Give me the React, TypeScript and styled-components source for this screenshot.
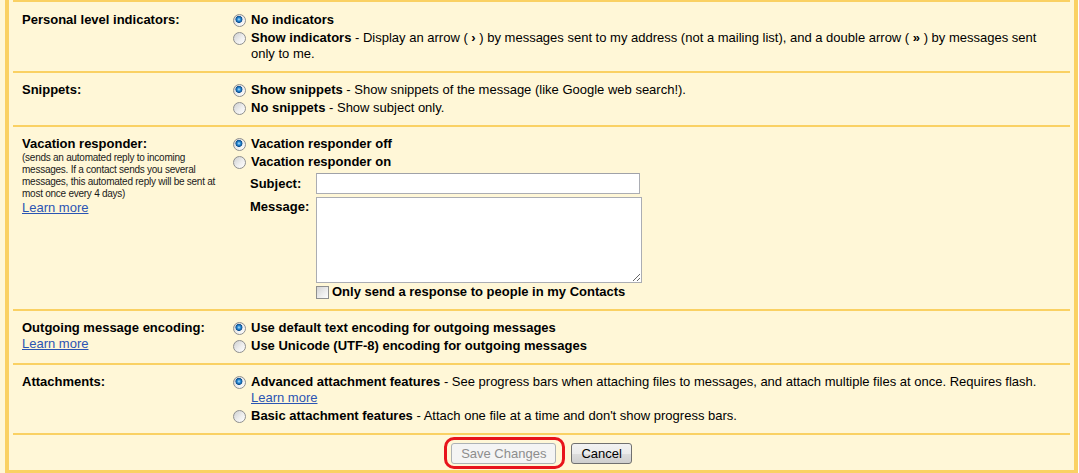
import React from "react";
import styled, { createGlobalStyle } from "styled-components";

const GlobalStyle = createGlobalStyle`
    html, body {
        margin: 0;
        padding: 0;
        background: #ffffff;
    }
    body {
        font-family: "Liberation Sans", Arial, sans-serif;
        font-size: 13px;
        color: #000;
    }
`;

const Page = styled.div`
    width: 1078px;
    padding-left: 5px;
    box-sizing: border-box;
    background: #fff7d7;
`;

const Frame = styled.div`
    background: #fff7d7;
    border: 4px solid #fad163;
    border-top: none;
    padding: 0 4px;
`;

const Section = styled.div<{ $first?: boolean }>`
    display: flex;
    border-top: 2px solid #fad163;
    padding-top: ${({ $first }) => ($first ? "10px" : "9px")};
    padding-bottom: 9px;
`;

const LabelCell = styled.div`
    width: 220px;
    flex: none;
    box-sizing: border-box;
    padding: 0 12px 0 9px;
    line-height: 16px;
`;

const Title = styled.div`
    font-weight: bold;
`;

const Hint = styled.div`
    font-size: 10px;
    line-height: 12px;
    letter-spacing: -0.25px;
    color: #1a1a1a;
`;

const Link = styled.a`
    color: #2b55b3;
    text-decoration: underline;
    cursor: pointer;
`;

const OptionCell = styled.div`
    flex: 1;
    padding-right: 8px;
    display: flex;
    flex-direction: column;
    gap: 2px;
`;

const Option = styled.label`
    display: flex;
    align-items: flex-start;
    line-height: 16px;
`;

const Radio = styled.input.attrs({ type: "radio" })`
    appearance: none;
    -webkit-appearance: none;
    flex: none;
    width: 13px;
    height: 13px;
    margin: 2px 5px 0 0;
    border-radius: 50%;
    border: 1px solid #8e8f8f;
    box-sizing: border-box;
    background: linear-gradient(135deg, #cfd0d1 0%, #eeeeee 55%, #ffffff 100%);
    &:checked {
        background:
            radial-gradient(circle at 45% 40%, #b8e2fb 0, #2c8fd8 1.6px, #0d4f8f 3.2px, rgba(13, 79, 143, 0) 3.8px),
            linear-gradient(135deg, #cfd0d1 0%, #eeeeee 55%, #ffffff 100%);
    }
`;

const OptionText = styled.span`
    flex: 1;
`;

const Strong = styled.b`
    font-weight: bold;
`;

const Form = styled.div`
    display: grid;
    grid-template-columns: 66px auto;
    justify-content: start;
    row-gap: 3px;
    margin: 1px 0 0 17px;
`;

const FieldLabel = styled.div<{ $top?: boolean }>`
    font-weight: bold;
    line-height: 16px;
    align-self: ${({ $top }) => ($top ? "start" : "center")};
    padding-top: ${({ $top }) => ($top ? "2px" : "0")};
`;

const TextInput = styled.input`
    width: 324px;
    height: 21px;
    box-sizing: border-box;
    border: 1px solid #abadb3;
    border-top-color: #a0a2a8;
    background: #fff;
    font: 13px "Liberation Sans", Arial, sans-serif;
    padding: 1px 3px;
    margin: 0;
`;

const TextArea = styled.textarea`
    width: 326px;
    height: 86px;
    box-sizing: border-box;
    border: 1px solid #abadb3;
    background: #fff;
    font: 13px "Liberation Sans", Arial, sans-serif;
    padding: 2px;
    margin: 0;
    display: block;
`;

const CheckRow = styled.label`
    grid-column: 2;
    display: flex;
    align-items: flex-start;
    font-weight: bold;
    line-height: 16px;
    margin-top: -2px;
`;

const Check = styled.input.attrs({ type: "checkbox" })`
    appearance: none;
    -webkit-appearance: none;
    flex: none;
    width: 13px;
    height: 13px;
    margin: 2px 3px 0 0;
    box-sizing: border-box;
    border: 1px solid #8e8f8f;
    background: linear-gradient(135deg, #d4d4d4 0%, #eeeeee 60%, #fdfdfd 100%);
`;

const ButtonRow = styled.div`
    display: flex;
    justify-content: center;
    gap: 15px;
    border-top: 2px solid #fad163;
    padding: 8px 0 6px;
`;

const Button = styled.button`
    height: 21px;
    padding: 0 9px;
    font: 13px "Liberation Sans", Arial, sans-serif;
    color: #000;
    border: 1px solid #707070;
    border-radius: 3px;
    background: linear-gradient(#f2f2f2 0%, #ebebeb 50%, #dddddd 51%, #cfcfcf 100%);
    &:disabled {
        color: #8d8d8d;
        border-color: #adb2b5;
        background: #f4f4f4;
    }
`;

const Highlight = styled.span`
    position: relative;
    display: inline-flex;
    &::after {
        content: "";
        position: absolute;
        top: -6px;
        bottom: -5px;
        left: -7px;
        right: -9px;
        border: 3px solid #e8141c;
        border-radius: 10px;
        pointer-events: none;
    }
`;

export default function App() {
    return (
        <>
            <GlobalStyle />
            <Page>
                <Frame>
                    <Section $first>
                        <LabelCell>
                            <Title>Personal level indicators:</Title>
                        </LabelCell>
                        <OptionCell>
                            <Option>
                                <Radio name="ind" defaultChecked />
                                <OptionText><Strong>No indicators</Strong></OptionText>
                            </Option>
                            <Option>
                                <Radio name="ind" />
                                <OptionText>
                                    <Strong>Show indicators</Strong> - Display an arrow ( <Strong>›</Strong> ) by messages sent to my address (not a mailing list), and a double arrow ( <Strong>»</Strong> ) by messages sent only to me.
                                </OptionText>
                            </Option>
                        </OptionCell>
                    </Section>

                    <Section>
                        <LabelCell>
                            <Title>Snippets:</Title>
                        </LabelCell>
                        <OptionCell>
                            <Option>
                                <Radio name="snip" defaultChecked />
                                <OptionText>
                                    <Strong>Show snippets</Strong> - Show snippets of the message (like Google web search!).
                                </OptionText>
                            </Option>
                            <Option>
                                <Radio name="snip" />
                                <OptionText>
                                    <Strong>No snippets</Strong> - Show subject only.
                                </OptionText>
                            </Option>
                        </OptionCell>
                    </Section>

                    <Section>
                        <LabelCell>
                            <Title>Vacation responder:</Title>
                            <Hint>
                                (sends an automated reply to incoming messages. If a contact sends you several messages, this automated reply will be sent at most once every 4 days)
                            </Hint>
                            <Link>Learn more</Link>
                        </LabelCell>
                        <OptionCell>
                            <Option>
                                <Radio name="vac" defaultChecked />
                                <OptionText><Strong>Vacation responder off</Strong></OptionText>
                            </Option>
                            <Option>
                                <Radio name="vac" />
                                <OptionText><Strong>Vacation responder on</Strong></OptionText>
                            </Option>
                            <Form>
                                <FieldLabel>Subject:</FieldLabel>
                                <TextInput />
                                <FieldLabel $top>Message:</FieldLabel>
                                <TextArea />
                                <CheckRow>
                                    <Check />
                                    Only send a response to people in my Contacts
                                </CheckRow>
                            </Form>
                        </OptionCell>
                    </Section>

                    <Section>
                        <LabelCell>
                            <Title>Outgoing message encoding:</Title>
                            <Link>Learn more</Link>
                        </LabelCell>
                        <OptionCell>
                            <Option>
                                <Radio name="enc" defaultChecked />
                                <OptionText><Strong>Use default text encoding for outgoing messages</Strong></OptionText>
                            </Option>
                            <Option>
                                <Radio name="enc" />
                                <OptionText><Strong>Use Unicode (UTF-8) encoding for outgoing messages</Strong></OptionText>
                            </Option>
                        </OptionCell>
                    </Section>

                    <Section>
                        <LabelCell>
                            <Title>Attachments:</Title>
                        </LabelCell>
                        <OptionCell>
                            <Option>
                                <Radio name="att" defaultChecked />
                                <OptionText>
                                    <Strong>Advanced attachment features</Strong> - See progress bars when attaching files to messages, and attach multiple files at once. Requires flash.
                                    <br />
                                    <Link>Learn more</Link>
                                </OptionText>
                            </Option>
                            <Option>
                                <Radio name="att" />
                                <OptionText>
                                    <Strong>Basic attachment features</Strong> - Attach one file at a time and don't show progress bars.
                                </OptionText>
                            </Option>
                        </OptionCell>
                    </Section>

                    <ButtonRow>
                        <Highlight>
                            <Button disabled>Save Changes</Button>
                        </Highlight>
                        <Button>Cancel</Button>
                    </ButtonRow>
                </Frame>
            </Page>
        </>
    );
}
